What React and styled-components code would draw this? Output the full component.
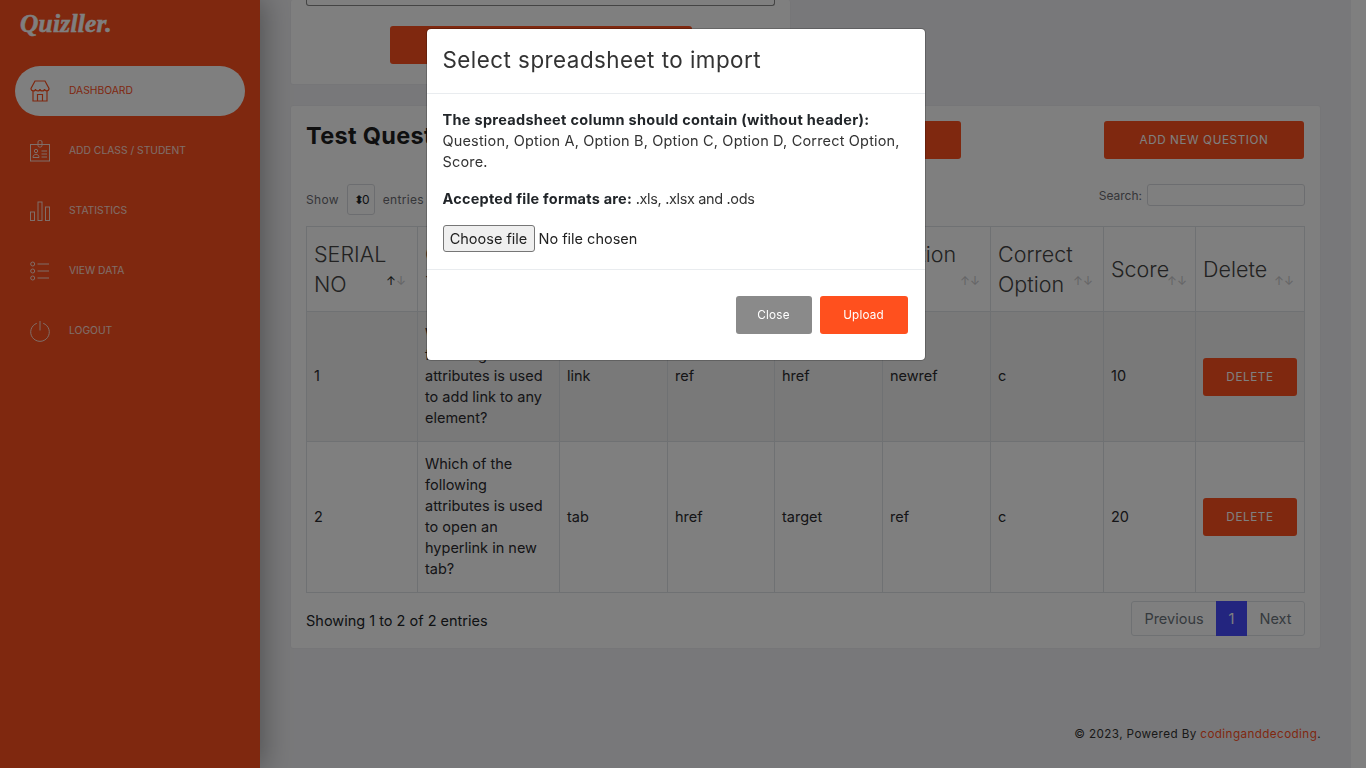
import React from "react";
import styled, { createGlobalStyle } from "styled-components";

const GlobalStyle = createGlobalStyle`
  html, body {
    margin: 0;
    padding: 0;
    height: 768px;
    overflow: hidden;
    background: #f1f1f4;
    font-family: "Inter", "Liberation Sans", sans-serif;
    color: #212529;
  }
  * { box-sizing: border-box; }
`;

const Layout = styled.div`
  display: flex;
  height: 768px;
  overflow: hidden;
`;

const Sidebar = styled.aside`
  flex: 0 0 260px;
  background: #ff501e;
  box-shadow: 4px 0 26px rgba(0, 0, 0, 0.32);
  z-index: 1;
  padding: 0 15px;
`;

const Logo = styled.div`
  height: 66px;
  padding: 10px 0 0 5px;
  font-family: "Liberation Serif", serif;
  font-style: italic;
  font-weight: 700;
  font-size: 25.5px;
  line-height: 28px;
  letter-spacing: 0.2px;
  color: #fff;
  -webkit-text-stroke: 0.5px #fff;
`;

const Nav = styled.nav`
  display: flex;
  flex-direction: column;
  gap: 10px;
`;

const NavItem = styled.a`
  display: flex;
  align-items: center;
  height: 50px;
  padding-left: 15px;
  gap: 19px;
  border-radius: 25px;
  background: ${(p) => (p.$active ? "#fff" : "transparent")};
  color: ${(p) => (p.$active ? "#ff501e" : "#fff")};
  font-size: 10.3px;
  text-transform: uppercase;
  opacity: ${(p) => (p.$active ? 1 : 0.8)};
  span { padding-bottom: 2px; }
  svg { flex: 0 0 20px; }
`;

const Main = styled.main`
  flex: 1;
  min-width: 0;
  display: flex;
  flex-direction: column;
  padding: 0 30px;
`;

const ScrollTrack = styled.div`
  flex: 0 0 15px;
  background: #fff;
`;

const Card = styled.section`
  background: #fff;
  border: 1px solid #ececf0;
  border-radius: 3px;
`;

const UploadCard = styled(Card)`
  width: 501px;
  height: 85px;
  flex: 0 0 85px;
  border-top: 0;
  padding: 0 15px;
  display: flex;
  flex-direction: column;
  align-items: center;
`;

const ClippedInput = styled.div`
  width: 100%;
  height: 6px;
  border: 1px solid #888;
  border-top: 0;
  border-radius: 0 0 3px 3px;
`;

const PrimaryButton = styled.button`
  height: 38px;
  width: ${(p) => p.$width}px;
  border: 0;
  border-radius: 3px;
  background: #ff501e;
  color: #fff;
  font-family: inherit;
  font-size: 11.7px;
  letter-spacing: 0.6px;
  text-transform: uppercase;
  padding: 0;
`;

const UploadButton = styled(PrimaryButton)`
  margin-top: 20px;
`;

const QuestionsCard = styled(Card)`
  margin-top: 20px;
  height: 544px;
  flex: 0 0 544px;
  padding: 15px 15px 0;
`;

const TitleRow = styled.div`
  display: flex;
  align-items: center;
  height: 38px;
  h2 {
    margin: 0;
    padding-bottom: 10px;
    font-size: 23.5px;
    font-weight: 700;
    letter-spacing: 0.3px;
    color: #1f1f1f;
  }
`;

const TitleActions = styled.div`
  margin-left: auto;
  display: flex;
  gap: 143px;
  padding-right: 1px;
`;

const Controls = styled.div`
  display: flex;
  align-items: flex-start;
  justify-content: space-between;
  margin-top: 25px;
  height: 42px;
  font-size: 12px;
  color: #6c6c72;
`;

const Length = styled.div`
  display: flex;
  align-items: center;
  height: 31px;
  gap: 8px;
  letter-spacing: 0.3px;
`;

const LengthBox = styled.div`
  width: 28px;
  height: 31px;
  border: 1px solid #d9dbe0;
  border-radius: 3px;
  display: flex;
  align-items: center;
  justify-content: center;
  color: #212529;
  font-size: 12px;
  letter-spacing: -2px;
`;

const Search = styled.div`
  display: flex;
  align-items: center;
  height: 22px;
  gap: 5px;
  input {
    width: 158px;
    height: 22px;
    border: 1px solid #d9dbe0;
    border-radius: 3px;
    background: transparent;
  }
`;

const Table = styled.table`
  width: 998px;
  table-layout: fixed;
  border-collapse: collapse;
  font-size: 14.5px;
  line-height: 21px;
  color: #2a2a2e;
  th, td {
    border: 1px solid #dee2e6;
    padding: 0 7px;
  }
  td { padding-bottom: 2px; }
  td:last-child { padding-bottom: 0; }
`;

const HeadCell = styled.th`
  position: relative;
  height: 85px;
  text-align: left;
  font-weight: 300;
  font-size: 21.5px;
  line-height: 30px;
  color: #444;
  white-space: pre-line;
`;

const SortArrows = styled.span`
  position: absolute;
  right: ${(p) => p.$right || 10}px;
  bottom: 24px;
  font-size: 12px;
  line-height: 12px;
  font-weight: 400;
  color: #c9c9cc;
  b {
    font-weight: 400;
    color: #222;
  }
`;

const Row = styled.tr`
  height: ${(p) => p.$height}px;
  background: ${(p) => (p.$striped ? "#f2f2f2" : "#fff")};
`;

const TableFooter = styled.div`
  display: flex;
  align-items: center;
  justify-content: space-between;
  margin-top: 8px;
  width: 999px;
  font-size: 14.5px;
  > span { padding-top: 3px; }
`;

const Pager = styled.div`
  display: flex;
  height: 35px;
  border: 1px solid #dee2e6;
  border-radius: 3px;
  color: #6c757d;
`;

const PageLink = styled.span`
  display: flex;
  align-items: center;
  justify-content: center;
  width: ${(p) => p.$width}px;
  background: ${(p) => (p.$current ? "#464aff" : "transparent")};
  color: ${(p) => (p.$current ? "#fff" : "inherit")};
  margin: ${(p) => (p.$current ? "-1px 0" : "0")};
`;

const Footer = styled.footer`
  margin-top: auto;
  padding-bottom: 26px;
  text-align: right;
  font-size: 11.7px;
  line-height: 16px;
  letter-spacing: 0.4px;
  color: #333;
  a { color: #ff501e; }
`;

const Overlay = styled.div`
  position: fixed;
  inset: 0;
  z-index: 10;
  background: rgba(0, 0, 0, 0.5);
  padding-right: 15px;
`;

const Modal = styled.div`
  width: 500px;
  margin: 28px auto 0;
  background: #fff;
  border: 1px solid rgba(0, 0, 0, 0.2);
  border-radius: 5px;
  background-clip: padding-box;
  font-size: 14.5px;
  line-height: 21px;
  color: #333;
`;

const ModalHeader = styled.div`
  height: 65px;
  padding: 16px;
  border-bottom: 1px solid #e9ecef;
  h5 {
    margin: 0;
    font-size: 22.4px;
    font-weight: 400;
    line-height: 30px;
    letter-spacing: 0.47px;
  }
`;

const ModalBody = styled.div`
  height: 176px;
  padding: 15px 16px;
  border-bottom: 1px solid #e9ecef;
  letter-spacing: 0.17px;
  p { margin: 0 0 16px; }
  strong { color: #212529; font-weight: 700; letter-spacing: 0.3px; }
`;

const FormatsLine = styled.p`
  letter-spacing: -0.35px;
  strong { letter-spacing: 0.22px; }
`;

const FileField = styled.label`
  display: flex;
  align-items: center;
  gap: 4px;
  margin-top: 2px;
  color: #222;
  letter-spacing: 0;
  input { display: none; }
`;

const FileButton = styled.span`
  display: flex;
  align-items: center;
  justify-content: center;
  width: 92px;
  height: 27px;
  background: #efefef;
  border: 1px solid #767676;
  border-radius: 3px;
`;

const ModalFooter = styled.div`
  height: 90px;
  padding: 26px 17px 26px 16px;
  display: flex;
  justify-content: flex-end;
  gap: 8px;
`;

const ModalButton = styled.button`
  height: 38px;
  width: ${(p) => p.$width}px;
  border: 0;
  border-radius: 3px;
  background: ${(p) => (p.$muted ? "#8a8a8a" : "#ff501e")};
  color: #fff;
  font-family: inherit;
  font-size: 11.7px;
  letter-spacing: 0.2px;
  padding: 0;
`;

const StoreIcon = () => (
  <svg width="20" height="22" viewBox="0 0 20 22" fill="none" stroke="currentColor" strokeWidth="1.2">
    <path d="M5 1h10l4 7.500c0 1.600-1.200 2.400-2.300 2.400-1.200 0-2.200-.9-2.200-2 0 1.100-1 2-2.300 2s-2.200-.9-2.200-2c0 1.100-1 2-2.300 2s-2.200-.9-2.200-2c0 1.100-1 2-2.200 2C2 10.900 1 10 1 8.500z" />
    <path d="M3 11v10h14V11M7.500 21v-6.500h5V21" />
  </svg>
);

const BadgeIcon = () => (
  <svg width="20" height="22" viewBox="0 0 20 22" fill="none" stroke="currentColor" strokeWidth="1">
    <rect x="0.500" y="4.500" width="19" height="16.500" />
    <rect x="8" y="0.500" width="4" height="6.500" rx="1.500" />
    <circle cx="6" cy="11" r="1.700" />
    <path d="M3 17.500c0-2 1.300-3.200 3-3.200s3 1.200 3 3.200zM11.500 11H17M11.500 14H17M11.500 17H17" />
  </svg>
);

const BarsIcon = () => (
  <svg width="20" height="20" viewBox="0 0 20 20" fill="none" stroke="currentColor" strokeWidth="1">
    <rect x="0.500" y="11" width="4" height="8.500" />
    <rect x="8" y="1" width="4" height="18.500" />
    <rect x="15.500" y="6" width="4" height="13.500" />
  </svg>
);

const ListIcon = () => (
  <svg width="20" height="20" viewBox="0 0 20 20" fill="none" stroke="currentColor" strokeWidth="1">
    <circle cx="2.700" cy="3" r="2" />
    <circle cx="2.700" cy="10" r="2" />
    <circle cx="2.700" cy="17" r="2" />
    <path d="M7.500 3H19M7.500 10H19M7.500 17H19" />
  </svg>
);

const PowerIcon = () => (
  <svg width="20" height="21" viewBox="0 0 20 21" fill="none" stroke="currentColor" strokeWidth="1">
    <path d="M6.800 2.300a9.300 9.300 0 1 0 6.400 0M10 0v9.500" />
  </svg>
);

const navItems = [
  { label: "Dashboard", Icon: StoreIcon, active: true },
  { label: "Add Class / Student", Icon: BadgeIcon },
  { label: "Statistics", Icon: BarsIcon },
  { label: "View Data", Icon: ListIcon },
  { label: "Logout", Icon: PowerIcon },
];

const columns = [
  { label: "SERIAL NO", width: 111, active: true, right: 11 },
  { label: "Question Text", width: 142 },
  { label: "Option\nA", width: 108 },
  { label: "Option\nB", width: 107 },
  { label: "Option\nC", width: 108 },
  { label: "Option\nD", width: 108 },
  { label: "Correct Option", width: 113 },
  { label: "Score", width: 92, right: 8 },
  { label: "Delete", width: 109 },
];

const rows = [
  {
    id: 1,
    height: 130,
    question: "Which of the following attributes is used to add link to any element?",
    options: ["link", "ref", "href", "newref"],
    correct: "c",
    score: 10,
  },
  {
    id: 2,
    height: 151,
    question: "Which of the following attributes is used to open an hyperlink in new tab?",
    options: ["tab", "href", "target", "ref"],
    correct: "c",
    score: 20,
  },
];

export default function App() {
  return (
    <>
      <GlobalStyle />
      <Layout>
        <Sidebar>
          <Logo>Quizller.</Logo>
          <Nav>
            {navItems.map(({ label, Icon, active }) => (
              <NavItem key={label} $active={active}>
                <Icon />
                <span>{label}</span>
              </NavItem>
            ))}
          </Nav>
        </Sidebar>
        <Main>
          <UploadCard>
            <ClippedInput />
            <UploadButton $width={302}>Upload</UploadButton>
          </UploadCard>
          <QuestionsCard>
            <TitleRow>
              <h2>Test Questions</h2>
              <TitleActions>
                <PrimaryButton $width={200}>Import</PrimaryButton>
                <PrimaryButton $width={200}>Add New Question</PrimaryButton>
              </TitleActions>
            </TitleRow>
            <Controls>
              <Length>
                Show <LengthBox>⬍0</LengthBox> entries
              </Length>
              <Search>
                Search: <input />
              </Search>
            </Controls>
            <Table>
              <colgroup>
                {columns.map((c) => (
                  <col key={c.label} style={{ width: c.width }} />
                ))}
              </colgroup>
              <thead>
                <tr>
                  {columns.map((c) => (
                    <HeadCell key={c.label}>
                      {c.label}
                      <SortArrows $right={c.right}>
                        {c.active ? <b>↑</b> : "↑"}↓
                      </SortArrows>
                    </HeadCell>
                  ))}
                </tr>
              </thead>
              <tbody>
                {rows.map((r) => (
                  <Row key={r.id} $height={r.height} $striped={r.id === 1}>
                    <td>{r.id}</td>
                    <td>{r.question}</td>
                    {r.options.map((o, i) => (
                      <td key={i}>{o}</td>
                    ))}
                    <td>{r.correct}</td>
                    <td>{r.score}</td>
                    <td>
                      <PrimaryButton $width={94}>Delete</PrimaryButton>
                    </td>
                  </Row>
                ))}
              </tbody>
            </Table>
            <TableFooter>
              <span>Showing 1 to 2 of 2 entries</span>
              <Pager>
                <PageLink $width={84}>Previous</PageLink>
                <PageLink $width={31} $current>
                  1
                </PageLink>
                <PageLink $width={57}>Next</PageLink>
              </Pager>
            </TableFooter>
          </QuestionsCard>
          <Footer>
            © 2023, Powered By <a>codinganddecoding</a>.
          </Footer>
        </Main>
        <ScrollTrack />
      </Layout>
      <Overlay>
        <Modal>
          <ModalHeader>
            <h5>Select spreadsheet to import</h5>
          </ModalHeader>
          <ModalBody>
            <p>
              <strong>The spreadsheet column should contain (without header):</strong> Question, Option A, Option B,
              Option C, Option D, Correct Option, Score.
            </p>
            <FormatsLine>
              <strong>Accepted file formats are:</strong> .xls, .xlsx and .ods
            </FormatsLine>
            <FileField>
              <input type="file" />
              <FileButton>Choose file</FileButton>
              No file chosen
            </FileField>
          </ModalBody>
          <ModalFooter>
            <ModalButton $muted $width={76}>
              Close
            </ModalButton>
            <ModalButton $width={88}>Upload</ModalButton>
          </ModalFooter>
        </Modal>
      </Overlay>
    </>
  );
}
